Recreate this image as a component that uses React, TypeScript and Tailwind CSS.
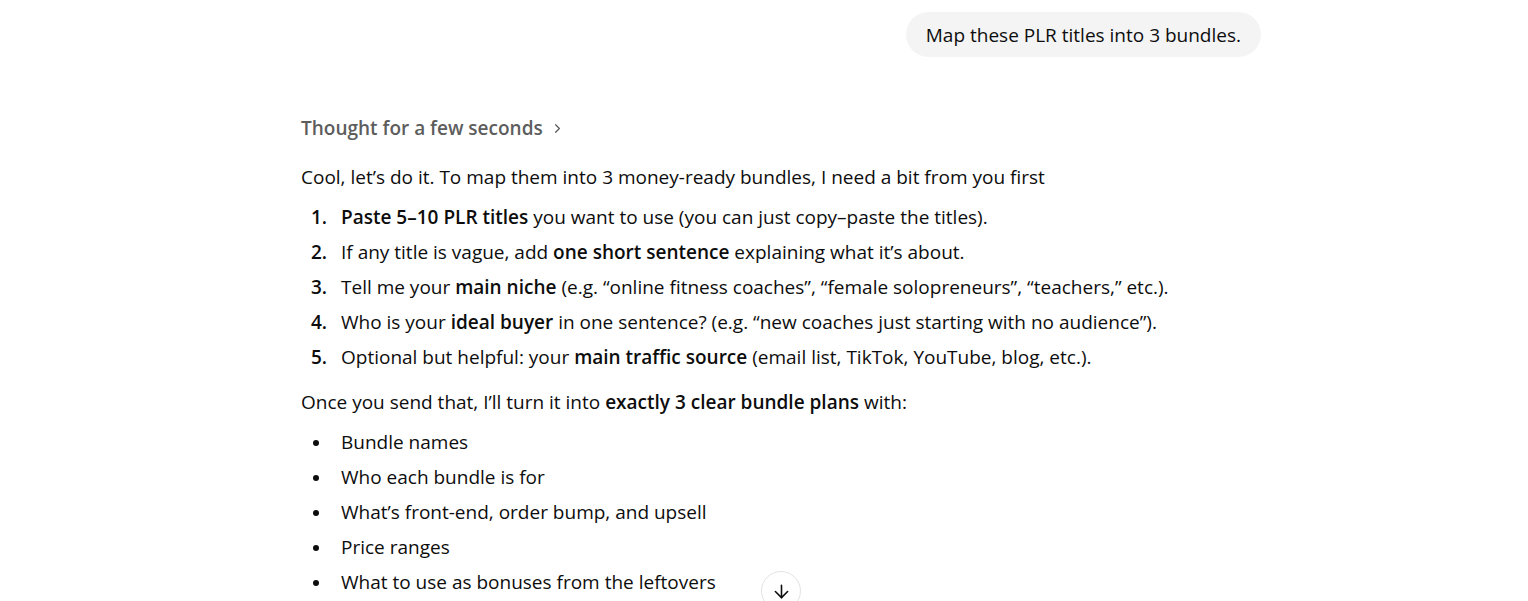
import { ArrowDown, ChevronRight } from "lucide-react";

const steps = [
  { n: "1.", b: "Paste 5–10 PLR titles", pre: "", post: " you want to use (you can just copy–paste the titles)." },
  { n: "2.", pre: "If any title is vague, add ", b: "one short sentence", post: " explaining what it’s about." },
  { n: "3.", pre: "Tell me your ", b: "main niche", post: " (e.g. “online fitness coaches”, “female solopreneurs”, “teachers,” etc.)." },
  { n: "4.", pre: "Who is your ", b: "ideal buyer", post: " in one sentence? (e.g. “new coaches just starting with no audience”)." },
  { n: "5.", pre: "Optional but helpful: your ", b: "main traffic source", post: " (email list, TikTok, YouTube, blog, etc.)." },
];

const bullets = [
  "Bundle names",
  "Who each bundle is for",
  "What’s front-end, order bump, and upsell",
  "Price ranges",
  "What to use as bonuses from the leftovers",
];

export default function App() {
  return (
    <div className="relative h-[601px] w-full overflow-hidden bg-white font-['Open_Sans',sans-serif] text-[19px] leading-[35px] text-[#0d0d0d]">
      <div className="ml-[301px] w-[960px] pt-[12px]">
        <div className="flex justify-end">
          <div className="rounded-full bg-[#f4f4f4] px-[20px] pt-[6px] pb-[4px]">Map these PLR titles into 3 bundles.</div>
        </div>

        <div className="mt-[54px] flex items-center gap-[7px] font-semibold text-[#5d5d5d]">
          Thought for a few seconds
          <ChevronRight className="h-[15px] w-[15px]" strokeWidth={2} />
        </div>

        <p className="mt-[14px]">Cool, let’s do it. To map them into 3 money-ready bundles, I need a bit from you first</p>

        <ol className="mt-[5px] flex flex-col">
          {steps.map((s) => (
            <li key={s.n} className="flex">
              <span className="w-[26px] text-right font-semibold">{s.n}</span>
              <span className="ml-[14px]">
                {s.pre}
                <strong className="font-semibold">{s.b}</strong>
                {s.post}
              </span>
            </li>
          ))}
        </ol>

        <p className="mt-[10px]">
          Once you send that, I’ll turn it into <strong className="font-semibold">exactly 3 clear bundle plans</strong> with:
        </p>

        <ul className="mt-[5px] flex flex-col">
          {bullets.map((b) => (
            <li key={b} className="flex items-center">
              <span className="ml-[12px] h-[6px] w-[6px] rounded-full bg-[#0d0d0d]" />
              <span className="ml-[22px]">{b}</span>
            </li>
          ))}
        </ul>
      </div>

      <button className="absolute left-[761px] top-[571px] flex h-[40px] w-[40px] items-center justify-center rounded-full border border-[#e3e3e3] bg-white">
        <ArrowDown className="h-[21px] w-[21px] text-[#0d0d0d]" strokeWidth={1.8} />
      </button>
    </div>
  );
}
